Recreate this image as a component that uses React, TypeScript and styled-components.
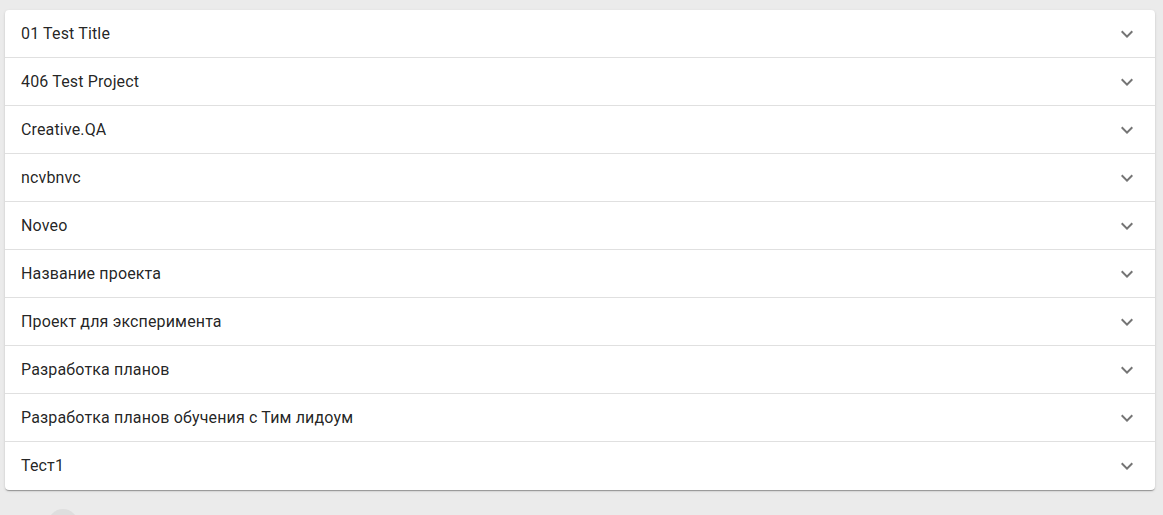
import { FC } from "react";
import styled, { createGlobalStyle } from "styled-components";

const projects = [
  "01 Test Title",
  "406 Test Project",
  "Creative.QA",
  "ncvbnvc",
  "Noveo",
  "Название проекта",
  "Проект для эксперимента",
  "Разработка планов",
  "Разработка планов обучения с Тим лидоум",
  "Тест1",
];

const GlobalStyle = createGlobalStyle`
  html, body {
    margin: 0;
    padding: 0;
    background: #ebebeb;
    font-family: Roboto, "Noto Sans", sans-serif;
  }
`;

const ExpandIcon: FC = () => (
  <svg width="24" height="24" viewBox="0 0 24 24" aria-hidden="true">
    <path d="M16.59 8.59 12 13.17 7.41 8.59 6 10l6 6 6-6z" fill="currentColor" />
  </svg>
);

const App: FC = () => {
  return (
    <Page>
      <GlobalStyle />
      <List>
        {projects.map((name) => (
          <Row key={name}>
            <Title>{name}</Title>
            <IconBox>
              <ExpandIcon />
            </IconBox>
          </Row>
        ))}
      </List>
      <Footer>
        <Bubble />
      </Footer>
    </Page>
  );
};

const Page = styled.main`
  padding: 10px 8px 0 5px;
  height: 515px;
  box-sizing: border-box;
  overflow: hidden;
`;

const List = styled.section`
  background: #fff;
  border-radius: 4px;
  box-shadow: 0px 2px 1px -1px rgba(0, 0, 0, 0.2),
    0px 1px 1px 0px rgba(0, 0, 0, 0.14), 0px 1px 3px 0px rgba(0, 0, 0, 0.12);
  overflow: hidden;
`;

const Row = styled.div`
  display: flex;
  align-items: center;
  justify-content: space-between;
  height: 48px;
  padding: 0 16px;
  box-sizing: border-box;
  border-bottom: 1px solid rgba(0, 0, 0, 0.12);

  &:last-child {
    border-bottom: none;
  }
`;

const Title = styled.span`
  font-size: 16px;
  line-height: 24px;
  color: rgba(0, 0, 0, 0.87);
  letter-spacing: 0.00938em;
`;

const IconBox = styled.span`
  display: flex;
  width: 24px;
  height: 24px;
  color: rgba(0, 0, 0, 0.54);
`;

const Footer = styled.div`
  display: flex;
  padding: 19px 0 0 43px;
`;

const Bubble = styled.span`
  width: 30px;
  height: 30px;
  border-radius: 50%;
  background: #dedede;
`;

export default App;
